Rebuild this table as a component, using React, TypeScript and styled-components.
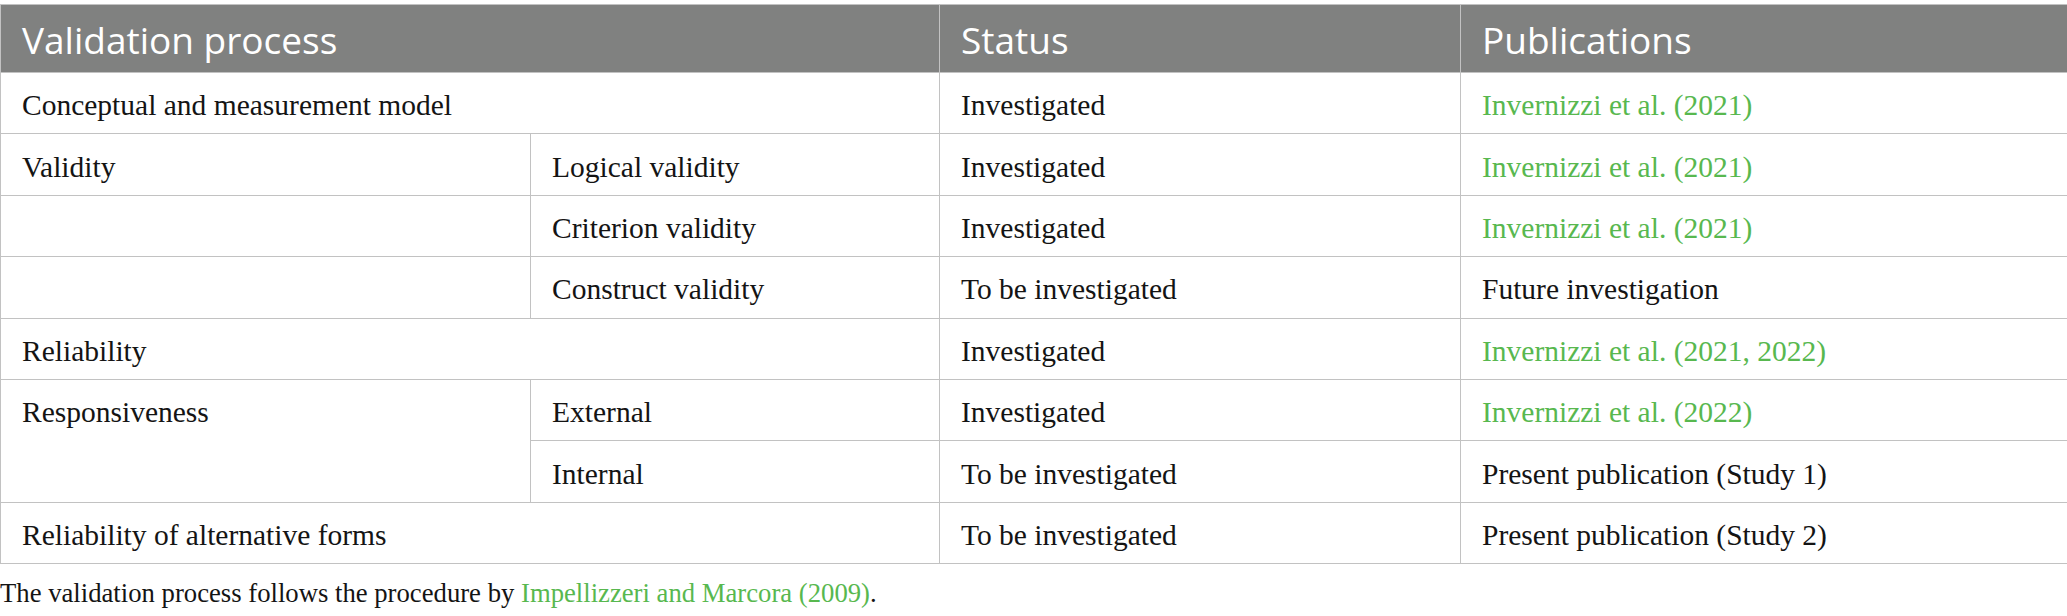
import React from "react";
import styled, { createGlobalStyle } from "styled-components";

const Global = createGlobalStyle`
  html, body { margin: 0; padding: 0; background: #ffffff; }
  body { font-family: "Liberation Serif", "Times New Roman", serif; }
`;

const Page = styled.div`
  padding-top: 4px;
  width: 2067px;
`;

const Table = styled.table`
  width: 2067px;
  border-collapse: collapse;
  table-layout: fixed;
`;

const HeadCell = styled.th`
  background: #808180;
  color: #ffffff;
  font-family: "Open Sans", "Noto Sans", sans-serif;
  font-weight: 400;
  font-size: 37px;
  text-align: left;
  height: 68px;
  padding: 2px 0 0 21px;
  border: 1px solid #c2c2c2;
  box-sizing: border-box;
  vertical-align: middle;
  white-space: nowrap;
`;

const Cell = styled.td<{ $top?: boolean }>`
  font-family: "Liberation Serif", "Times New Roman", serif;
  font-size: 29.5px;
  color: #141414;
  height: 61.4px;
  padding: 4px 0 0 21px;
  border: 1px solid #c2c2c2;
  box-sizing: border-box;
  vertical-align: ${(p) => (p.$top ? "top" : "middle")};
  line-height: 56px;
  white-space: nowrap;
`;

const Link = styled.span`
  color: #58b84f;
`;

const Note = styled.p`
  margin: 14px 0 0 0;
  font-family: "Liberation Serif", "Times New Roman", serif;
  font-size: 26.7px;
  color: #141414;
`;

type Row = {
  a?: string;
  b?: string;
  span?: boolean;
  rowSpan?: number;
  skipA?: boolean;
  status: string;
  pub: string;
  green: boolean;
};

const rows: Row[] = [
  { a: "Conceptual and measurement model", span: true, status: "Investigated", pub: "Invernizzi et al. (2021)", green: true },
  { a: "Validity", b: "Logical validity", status: "Investigated", pub: "Invernizzi et al. (2021)", green: true },
  { a: "", b: "Criterion validity", status: "Investigated", pub: "Invernizzi et al. (2021)", green: true },
  { a: "", b: "Construct validity", status: "To be investigated", pub: "Future investigation", green: false },
  { a: "Reliability", span: true, status: "Investigated", pub: "Invernizzi et al. (2021, 2022)", green: true },
  { a: "Responsiveness", b: "External", rowSpan: 2, status: "Investigated", pub: "Invernizzi et al. (2022)", green: true },
  { skipA: true, b: "Internal", status: "To be investigated", pub: "Present publication (Study 1)", green: false },
  { a: "Reliability of alternative forms", span: true, status: "To be investigated", pub: "Present publication (Study 2)", green: false },
];

export default function App() {
  return (
    <Page>
      <Global />
      <Table>
        <colgroup>
          <col style={{ width: 530 }} />
          <col style={{ width: 409 }} />
          <col style={{ width: 521 }} />
          <col style={{ width: 607 }} />
        </colgroup>
        <thead>
          <tr>
            <HeadCell colSpan={2}>Validation process</HeadCell>
            <HeadCell>Status</HeadCell>
            <HeadCell>Publications</HeadCell>
          </tr>
        </thead>
        <tbody>
          {rows.map((r, i) => (
            <tr key={i}>
              {r.span ? (
                <Cell colSpan={2}>{r.a}</Cell>
              ) : (
                <>
                  {!r.skipA && (
                    <Cell rowSpan={r.rowSpan} $top={!!r.rowSpan}>
                      {r.a}
                    </Cell>
                  )}
                  <Cell>{r.b}</Cell>
                </>
              )}
              <Cell>{r.status}</Cell>
              <Cell>{r.green ? <Link>{r.pub}</Link> : r.pub}</Cell>
            </tr>
          ))}
        </tbody>
      </Table>
      <Note>
        The validation process follows the procedure by{" "}
        <Link>Impellizzeri and Marcora (2009)</Link>.
      </Note>
    </Page>
  );
}
